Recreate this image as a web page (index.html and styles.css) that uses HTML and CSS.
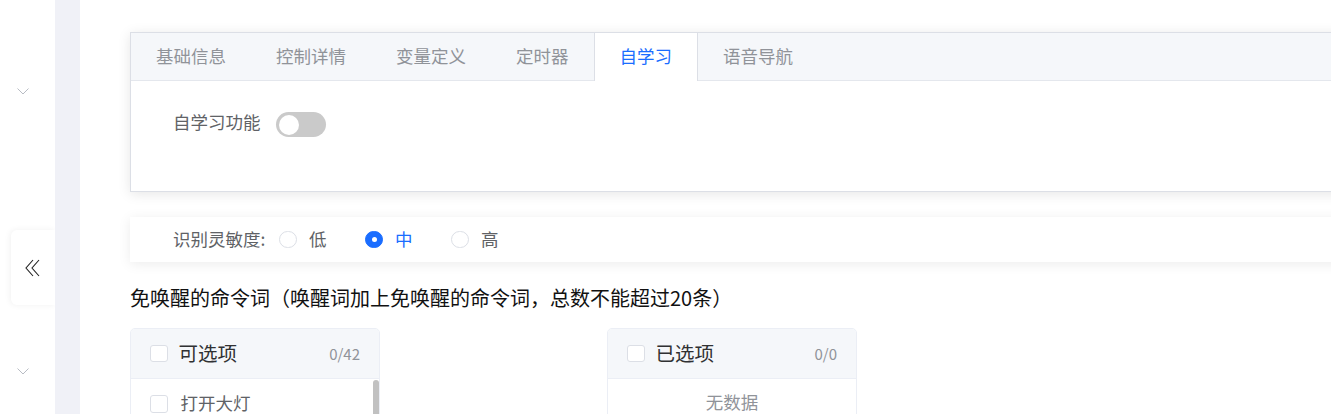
FILE: index.html
```html
<!DOCTYPE html>
<html lang="zh">
<head>
<meta charset="utf-8">
<link rel="stylesheet" href="styles.css">
</head>
<body>
<div class="app">
  <aside class="sidebar">
    <svg class="chev chev-top" width="12" height="7" viewBox="0 0 12 7"><polyline points="0.5,0.5 6,6 11.5,0.5" fill="none" stroke="#b8bcc4" stroke-width="1"/></svg>
    <div class="collapse">
      <svg width="16" height="18" viewBox="0 0 16 18"><polyline points="8,1 1,9 8,17" fill="none" stroke="#222" stroke-width="1.1"/><polyline points="14,1 7,9 14,17" fill="none" stroke="#222" stroke-width="1.1"/></svg>
    </div>
    <svg class="chev chev-bottom" width="12" height="7" viewBox="0 0 12 7"><polyline points="0.5,0.5 6,6 11.5,0.5" fill="none" stroke="#b8bcc4" stroke-width="1"/></svg>
  </aside>
  <div class="gutter"></div>
  <main class="main">
    <section class="tabs-card">
      <div class="tabs-header">
        <div class="tab">基础信息</div>
        <div class="tab">控制详情</div>
        <div class="tab">变量定义</div>
        <div class="tab">定时器</div>
        <div class="tab active">自学习</div>
        <div class="tab">语音导航</div>
      </div>
      <div class="tabs-pane">
        <span class="form-label pane-label">自学习功能</span>
        <span class="switch"><span class="knob"></span></span>
      </div>
    </section>

    <section class="radio-card">
      <span class="form-label">识别灵敏度:</span>
      <label class="radio"><span class="dot"></span><span class="radio-text">低</span></label>
      <label class="radio checked"><span class="dot"></span><span class="radio-text">中</span></label>
      <label class="radio"><span class="dot"></span><span class="radio-text">高</span></label>
    </section>

    <h2 class="title">免唤醒的命令词（唤醒词加上免唤醒的命令词，总数不能超过20条）</h2>

    <div class="transfer">
      <div class="panel">
        <div class="panel-head">
          <span class="checkbox"></span>
          <span class="panel-title">可选项</span>
          <span class="count">0/42</span>
        </div>
        <div class="panel-body">
          <div class="item"><span class="checkbox"></span><span class="item-text">打开大灯</span></div>
          <div class="scrollbar"></div>
        </div>
      </div>
      <div class="panel panel-right">
        <div class="panel-head">
          <span class="checkbox"></span>
          <span class="panel-title">已选项</span>
          <span class="count">0/0</span>
        </div>
        <div class="panel-body">
          <div class="empty">无数据</div>
        </div>
      </div>
    </div>
  </main>
</div>
</body>
</html>
```
FILE: styles.css
```css
* { box-sizing: border-box; }
html, body {
  margin: 0;
  padding: 0;
  height: 414px;
  overflow: hidden;
  background: #fff;
  font-family: "Noto Sans CJK SC", "Noto Sans", sans-serif;
}
.app {
  display: flex;
  height: 414px;
}
.sidebar {
  width: 55px;
  flex: none;
  background: #fff;
  display: flex;
  flex-direction: column;
  align-items: flex-start;
}
.chev { display: block; margin-left: 17px; }
.chev-top { margin-top: 88px; }
.collapse {
  margin-top: 135px;
  margin-left: 11px;
  width: 44px;
  height: 75px;
  background: #fff;
  border-radius: 6px 0 0 6px;
  box-shadow: -1px 0 6px rgba(0,0,0,0.06);
  display: flex;
  align-items: center;
  justify-content: center;
}
.collapse svg { margin-top: 1px; }
.chev-bottom { margin-top: 63px; }
.gutter {
  width: 25px;
  flex: none;
  background: #f0f1f7;
}
.main {
  flex: 1;
  min-width: 0;
  overflow: hidden;
  padding: 32px 0 0 50px;
}
.tabs-card {
  width: 1260px;
  border: 1px solid #dcdfe6;
  background: #fff;
  box-shadow: 0 2px 12px rgba(0,0,0,0.1);
}
.tabs-header {
  display: flex;
  height: 48px;
  background: #f5f7fa;
  border-bottom: 1px solid #e4e7ed;
}
.tab {
  padding: 0 25px;
  height: 48px;
  line-height: 46px;
  font-size: 17.5px;
  color: #909399;
}
.tab.active {
  background: #fff;
  color: #1a6dff;
  border-left: 1px solid #dcdfe6;
  border-right: 1px solid #dcdfe6;
  padding: 0 25px 0 25px;
  margin-bottom: -1px;
  height: 48px;
}
.tabs-pane {
  height: 110px;
  padding: 31px 0 0 42px;
  display: flex;
  align-items: flex-start;
}
.form-label {
  font-size: 17.5px;
  color: #606266;
  line-height: 25px;
}
.pane-label { margin-top: -3px; }
.switch {
  margin-left: 15px;
  width: 50px;
  height: 25px;
  border-radius: 12.5px;
  background: #cacaca;
  position: relative;
  display: inline-block;
}
.knob {
  position: absolute;
  left: 3px;
  top: 2.5px;
  width: 20px;
  height: 20px;
  border-radius: 50%;
  background: #fff;
}
.radio-card {
  margin-top: 25px;
  width: 1260px;
  height: 45px;
  background: #fff;
  box-shadow: 0 2px 12px rgba(0,0,0,0.08);
  display: flex;
  align-items: center;
  padding-left: 43px;
}
.radio-card .form-label { margin-right: 14px; margin-top: -2px; }
.radio {
  display: flex;
  align-items: center;
  margin-right: 39px;
}
.dot {
  width: 17.5px;
  height: 17.5px;
  border-radius: 50%;
  border: 1px solid #dcdfe6;
  background: #fff;
  position: relative;
}
.radio-text {
  margin-left: 12px;
  font-size: 17.5px;
  color: #606266;
  margin-top: -2px;
}
.radio.checked .dot {
  background: #1a6dff;
  border-color: #1a6dff;
}
.radio.checked .dot::after {
  content: "";
  position: absolute;
  left: 50%;
  top: 50%;
  width: 5px;
  height: 5px;
  margin: -2.5px 0 0 -2.5px;
  border-radius: 50%;
  background: #fff;
}
.radio.checked .radio-text { color: #1a6dff; }
.title {
  margin: 23px 0 0 0;
  font-size: 20px;
  font-weight: normal;
  color: #111;
  line-height: 26px;
}
.transfer {
  display: flex;
  margin-top: 17px;
}
.panel {
  width: 250px;
  height: 120px;
  border: 1px solid #ebeef5;
  border-radius: 5px;
  overflow: hidden;
}
.panel-right { margin-left: 227px; }
.panel-head {
  height: 50px;
  background: #f5f7fa;
  border-bottom: 1px solid #ebeef5;
  display: flex;
  align-items: center;
  padding: 0 19px;
}
.checkbox {
  width: 17.5px;
  height: 17.5px;
  border: 1px solid #dcdfe6;
  border-radius: 3px;
  background: #fff;
  flex: none;
}
.panel-title {
  margin-left: 11px;
  font-size: 19.5px;
  color: #303133;
  flex: 1;
  margin-top: -2px;
}
.count {
  font-size: 15px;
  color: #909399;
}
.panel-body {
  position: relative;
  padding-top: 6px;
}
.item {
  height: 37.5px;
  display: flex;
  align-items: center;
  padding-left: 19px;
}
.item-text {
  margin-left: 13px;
  font-size: 17.5px;
  color: #606266;
  margin-top: -2px;
}
.scrollbar {
  position: absolute;
  right: 0;
  top: 1px;
  width: 6px;
  height: 100px;
  border-radius: 3px;
  background: #c1c1c1;
}
.empty {
  text-align: center;
  font-size: 17.5px;
  color: #909399;
  line-height: 37.5px;
  margin-top: -2px;
}
```
